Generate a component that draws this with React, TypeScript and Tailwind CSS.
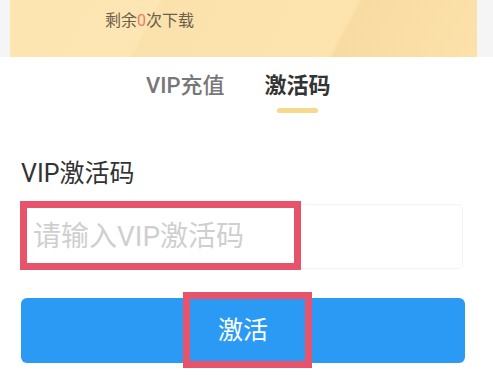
import React from "react";

export default function App() {
  const font = { fontFamily: 'Roboto, "Noto Sans CJK SC", sans-serif' };
  return (
    <div className="w-[493px] h-[379px] bg-white overflow-hidden" style={font}>
      <div className="bg-[#f5f5f5] px-[10px]">
        <div className="h-[57px] w-[467px] bg-[linear-gradient(118deg,#fde5b2_0%,#fde6b3_30%,#fbe1ab_31%,#fde3ae_70%,#f8dba2_71%,#fce1aa_100%)] pl-[95px] pt-[8px]">
          <span className="text-[16px] leading-[26px] text-[#6b5f4b]">
            剩余<span className="text-[#ef7a68]">0</span>次下载
          </span>
        </div>
      </div>

      <div className="flex pl-[146px] gap-[40px] mt-[12px]">
        <div className="flex flex-col items-center">
          <span className="text-[22px] leading-[33px] font-medium text-[#777777]">VIP充值</span>
        </div>
        <div className="flex flex-col items-center">
          <span className="text-[22px] leading-[33px] font-bold text-[#333333]">激活码</span>
          <div className="mt-[6px] h-[5px] w-[41px] rounded-full bg-[#f6d98c]" />
        </div>
      </div>

      <div className="ml-[21px] mt-[45px] text-[25px] leading-[32px] text-[#333333]">VIP激活码</div>

      <div className="relative ml-[21px] mt-[14px] w-[442px] h-[65px] rounded-[5px] border border-[#f3f3f3] flex items-center pl-[11px]">
        <span className="text-[28px] leading-[36px] text-[#cfcfcf]">请输入VIP激活码</span>
        <div className="absolute left-[-2px] top-[-4px] w-[281px] h-[69px] border-[7px] border-[#e6536a]" />
      </div>

      <div className="relative ml-[21px] mt-[29px] w-[444px] h-[65px] rounded-[6px] bg-[#2a9af4] flex items-center justify-center">
        <span className="text-[25px] leading-[34px] text-white">激活</span>
        <div className="absolute left-[162px] top-[-6px] w-[129px] h-[76px] border-[7px] border-[#e6536a]" />
      </div>
    </div>
  );
}
